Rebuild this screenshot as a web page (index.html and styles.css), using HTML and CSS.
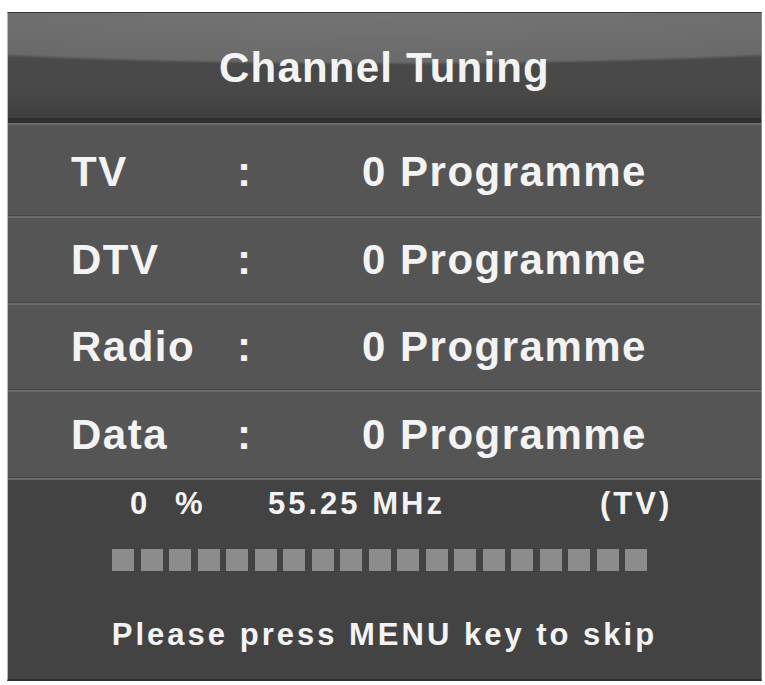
FILE: index.html
```html
<!DOCTYPE html>
<html>
<head>
<meta charset="utf-8">
<link rel="stylesheet" href="styles.css">
</head>
<body>
<div class="panel">
  <div class="header"><span class="title">Channel Tuning</span></div>
  <div class="rows">
    <div class="row row-first"><span class="label">TV</span><span class="colon">:</span><span class="value">0 Programme</span></div>
    <div class="row"><span class="label">DTV</span><span class="colon">:</span><span class="value">0 Programme</span></div>
    <div class="row"><span class="label">Radio</span><span class="colon">:</span><span class="value">0 Programme</span></div>
    <div class="row row-last"><span class="label">Data</span><span class="colon">:</span><span class="value">0 Programme</span></div>
  </div>
  <div class="status">
    <div class="info"><span>0</span><span>%</span><span>55.25 MHz</span><span>(TV)</span></div>
    <div class="bar">
      <i></i><i></i><i></i><i></i><i></i><i></i><i></i><i></i><i></i><i></i>
      <i></i><i></i><i></i><i></i><i></i><i></i><i></i><i></i><i></i>
    </div>
    <div class="hint">Please press MENU key to skip</div>
  </div>
</div>
</body>
</html>
```
FILE: styles.css
```css
html, body {
  margin: 0;
  padding: 0;
  background: #ffffff;
}
body {
  font-family: "Liberation Sans", Arial, sans-serif;
  font-weight: bold;
  color: #f3f3f3;
}
.panel {
  margin: 12px 0 0 7px;
  width: 755px;
  height: 669px;
  box-sizing: border-box;
  border-left: 1px solid #b8b8b8;
  border-right: 1px solid #8a8a8a;
  border-top: 1px solid #3a3a3a;
  border-bottom: 2px solid #2e2e2e;
  display: flex;
  flex-direction: column;
  background: #434343;
}
.header {
  border-bottom: 5px solid #2f2f2f;
  display: flex;
  align-items: center;
  justify-content: center;
  padding-top: 4px;
  box-sizing: border-box;
  height: 110px;
  background:
    radial-gradient(ellipse 95% 52px at 50% 0, #747474 0%, #6a6a6a 94%, rgba(106,106,106,0) 100%),
    linear-gradient(#4b4b4b, #484848 75%, #3f3f3f);
}
.title {
  font-size: 42px;
  letter-spacing: 1.2px;
  line-height: 48px;
}
.rows {
  border-top: 2px solid #6c6c6c;
  background: #555555;
}
.row {
  display: grid;
  grid-template-columns: 166px 125px auto;
  align-items: center;
  padding-left: 63px;
  height: 84px;
  font-size: 42px;
  letter-spacing: 1.5px;
  line-height: 48px;
  border-top: 2px solid #6a6a6a;
  border-bottom: 1px solid #464646;
}
.row-first {
  border-top: none;
  height: 91px;
  padding-top: 4px;
  box-sizing: border-box;
}
.row-last {
  height: 85px;
}
.status {
  flex: 1;
  border-top: 2px solid #6a6a6a;
  background: #434343;
  padding-top: 6px;
}
.info {
  display: grid;
  grid-template-columns: 45px 93px 332px auto;
  padding-left: 122px;
  font-size: 31px;
  letter-spacing: 3px;
  line-height: 36px;
}
.bar {
  display: flex;
  gap: 6.5px;
  padding-left: 104px;
  margin-top: 27px;
}
.bar i {
  display: block;
  width: 22px;
  height: 22px;
  background: #8c8c8c;
}
.hint {
  margin-top: 46px;
  text-align: center;
  font-size: 31px;
  letter-spacing: 3px;
  line-height: 36px;
}
```
